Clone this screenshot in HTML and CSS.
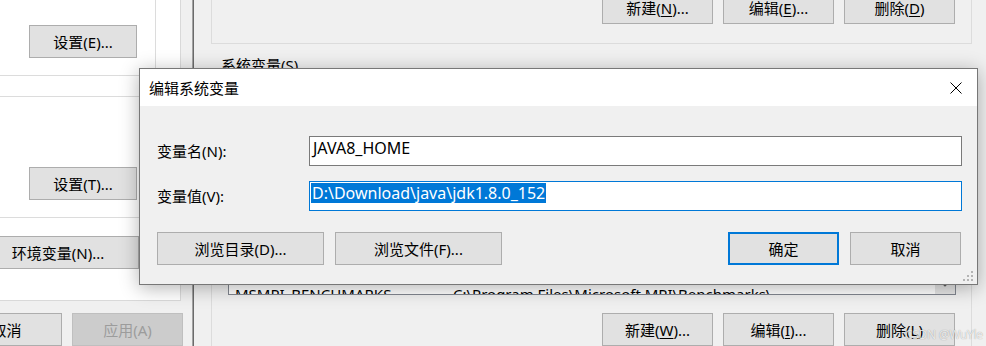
FILE: index.html
```html
<!DOCTYPE html>
<html lang="zh-CN">
<head>
<meta charset="utf-8">
<title>编辑系统变量</title>
<link rel="stylesheet" href="styles.css">
</head>
<body>
<div class="sysprops">
  <div class="tabpage">
    <div class="grp grp-perf"><button class="btn btn-set">设置(E)...</button></div>
    <div class="grp grp-profile"><button class="btn btn-set">设置(T)...</button></div>
    <button class="btn btn-env">环境变量(N)...</button>
  </div>
  <div class="sys-foot">
    <button class="btn btn-std">取消</button>
    <button class="btn btn-std" disabled>应用(A)</button>
  </div>
</div>

<div class="envwin">
  <div class="grp grp-user">
    <button class="btn btn-std">新建(<u>N</u>)...</button>
    <button class="btn btn-std">编辑(<u>E</u>)...</button>
    <button class="btn btn-std">删除(<u>D</u>)</button>
  </div>
  <div class="grp-caption">系统变量(S)</div>
  <div class="grp grp-sys">
    <div class="listbox">
      <div class="list-rows">
        <div class="list-row list-head"><span>变量</span><span>值</span></div>
        <div class="list-row"><span>asl.log</span><span>Destination=file</span></div>
        <div class="list-row"><span>CLASSPATH</span><span>.;%JAVA_HOME%\lib;%JAVA_HOME%\lib\tools.jar</span></div>
        <div class="list-row"><span>ComSpec</span><span>C:\Windows\system32\cmd.exe</span></div>
        <div class="list-row"><span>configsetroot</span><span>C:\Windows\ConfigSetRoot</span></div>
        <div class="list-row"><span>DriverData</span><span>C:\Windows\System32\Drivers\DriverData</span></div>
        <div class="list-row"><span>JAVA8_HOME</span><span>D:\Download\java\jdk1.8.0_152</span></div>
        <div class="list-row"><span>JAVA_HOME</span><span>C:\Program Files\Java\jdk1.8.0</span></div>
        <div class="list-row"><span>MSMPI_BENCHMARKS</span><span>C:\Program Files\Microsoft MPI\Benchmarks\</span></div>
        <div class="list-row"><span>MSMPI_BIN</span><span>C:\Program Files\Microsoft MPI\Bin\</span></div>
      </div>
      <div class="vscroll">
        <div class="vtrack"></div>
        <div class="varrow">
          <svg width="10" height="6" viewBox="0 0 10 6"><path d="M0.5 0.5L5 5L9.5 0.5" fill="none" stroke="#606060" stroke-width="1.2"/></svg>
        </div>
      </div>
    </div>
    <div class="grp-sys-actions">
      <button class="btn btn-std">新建(<u>W</u>)...</button>
      <button class="btn btn-std">编辑(<u>I</u>)...</button>
      <button class="btn btn-std">删除(<u>L</u>)</button>
    </div>
  </div>
</div>

<div class="dialog" role="dialog" aria-label="编辑系统变量">
  <div class="dlg-title">
    <span class="dlg-caption">编辑系统变量</span>
    <svg class="dlg-close" width="12" height="12" viewBox="0 0 12 12"><path d="M0.5 0.5L11.5 11.5M11.5 0.5L0.5 11.5" stroke="#000" stroke-width="1"/></svg>
  </div>
  <div class="dlg-body">
    <div class="field">
      <label class="field-label">变量名(N):</label>
      <div class="field-input">JAVA8_HOME</div>
    </div>
    <div class="field">
      <label class="field-label">变量值(V):</label>
      <div class="field-input focused"><span class="sel">D:\Download\java\jdk1.8.0_152</span></div>
    </div>
    <div class="dlg-actions">
      <button class="btn btn-wide">浏览目录(D)...</button>
      <button class="btn btn-wide">浏览文件(F)...</button>
      <span class="spacer"></span>
      <button class="btn btn-std btn-default">确定</button>
      <button class="btn btn-std">取消</button>
    </div>
  </div>
  <svg class="grip" width="11" height="11" viewBox="0 0 11 11" fill="#b4b4b4">
    <rect x="8" y="0" width="2" height="2"/>
    <rect x="4" y="4" width="2" height="2"/><rect x="8" y="4" width="2" height="2"/>
    <rect x="0" y="8" width="2" height="2"/><rect x="4" y="8" width="2" height="2"/><rect x="8" y="8" width="2" height="2"/>
  </svg>
</div>

<div class="watermark">CSDN @WuYle</div>
</body>
</html>
```

FILE: styles.css
```css
* { box-sizing: border-box; margin: 0; padding: 0; }

html, body {
  width: 986px;
  height: 346px;
  overflow: hidden;
}

body {
  position: relative;
  display: flex;
  background: #f0f0f0;
  color: #000;
  font-family: "Noto Sans", "Noto Sans CJK SC", sans-serif;
  font-size: 15px;
  line-height: 20px;
}

u { text-decoration: underline; text-underline-offset: 2px; }

/* ---------- buttons ---------- */
.btn {
  flex: none;
  display: flex;
  align-items: center;
  justify-content: center;
  height: 33px;
  padding: 0;
  background: #e1e1e1;
  border: 1px solid #adadad;
  border-radius: 0;
  font: inherit;
  color: #000;
  white-space: nowrap;
  appearance: none;
}
.btn:disabled { background: #cccccc; border-color: #bfbfbf; color: #9c9c9c; }
.btn-std { width: 111px; }
.btn-set { width: 108px; }
.btn-wide { width: 167px; }
.btn-default { border: 2px solid #0078d7; }

/* ---------- left window (system properties) ---------- */
.sysprops {
  flex: none;
  width: 192px;
  display: flex;
  flex-direction: column;
  background: #f0f0f0;
}
.tabpage {
  width: 181px;
  height: 314px;
  background: #fff;
  border-right: 1px solid #d9d9d9;
  border-bottom: 1px solid #d9d9d9;
  display: flex;
  flex-direction: column;
  align-items: flex-start;
}
.grp { border: 1px solid #dcdcdc; }
.grp-perf {
  width: 156px;
  height: 76px;
  border-top: 0;
  border-left: 0;
  padding: 25px 0 0 29px;
}
.grp-profile {
  width: 156px;
  height: 122px;
  margin-top: 20px;
  border-left: 0;
  padding: 70px 0 0 29px;
}
.btn-env { width: 162px; margin: 18px 0 0 -23px; }
.sys-foot {
  display: flex;
  gap: 10px;
  margin: 12px 0 0 -49px;
}

/* ---------- right window (environment variables) ---------- */
.envwin {
  flex: 1;
  min-width: 0;
  display: flex;
  flex-direction: column;
  align-items: flex-start;
  background: #f0f0f0;
  border-left: 1px solid #a3a3a3;
  box-shadow: inset 1px 0 0 #6b6b6b;
}
.grp-user {
  width: 761px;
  height: 69px;
  margin: -20px 0 0 18px;
  display: flex;
  justify-content: flex-end;
  align-items: flex-end;
  gap: 10px;
  padding: 0 16px 19px 0;
}
.grp-caption { height: 20px; margin: 11px 0 0 28px; }
.grp-sys {
  flex: 1;
  width: 761px;
  margin-left: 18px;
  border-bottom: 0;
  padding: 4px 15px 0 16px;
}
.listbox {
  height: 215px;
  border: 1px solid #828790;
  background: #fff;
  display: flex;
}
.list-rows { flex: 1; min-width: 0; overflow: hidden; padding-top: 7px; }
.list-row {
  display: grid;
  grid-template-columns: 218px 1fr;
  height: 24px;
  line-height: 24px;
  white-space: nowrap;
}
.list-head { height: 26px; line-height: 26px; }
.list-row span { padding-left: 6px; overflow: hidden; }
.vscroll {
  width: 20px;
  display: flex;
  flex-direction: column;
  background: #f0f0f0;
}
.vtrack { flex: 1; }
.varrow {
  height: 20px;
  display: flex;
  align-items: center;
  justify-content: center;
  background: #e6e6e6;
}
.grp-sys-actions {
  display: flex;
  justify-content: flex-end;
  gap: 10px;
  margin-top: 18px;
  padding-right: 1px;
}

/* ---------- modal dialog ---------- */
.dialog {
  position: absolute;
  left: 139px;
  top: 68px;
  width: 839px;
  height: 217px;
  display: flex;
  flex-direction: column;
  background: #f0f0f0;
  border: 1px solid #777777;
  box-shadow: 0 3px 18px rgba(0, 0, 0, 0.3);
}
.dlg-title {
  height: 37px;
  flex: none;
  display: flex;
  align-items: center;
  background: #fff;
  padding: 0 15px 0 9px;
}
.dlg-caption { flex: 1; }
.dlg-close { display: block; }
.dlg-body {
  flex: 1;
  display: flex;
  flex-direction: column;
  padding: 30px 15px 19px 17px;
}
.field { display: flex; align-items: center; height: 30px; }
.field + .field { margin-top: 15px; }
.field-label { width: 152px; flex: none; }
.field-input {
  flex: 1;
  height: 30px;
  padding: 1px 1px 0 3px;
  background: #fff;
  border: 1px solid #7a7a7a;
  font-size: 16px;
  white-space: nowrap;
}
.field-input.focused { border-color: #0078d7; padding-left: 1px; }
.sel { display: inline-block; background: #0078d7; color: #fff; padding: 0 1px; }
.dlg-actions {
  display: flex;
  gap: 11px;
  margin-top: 21px;
  padding-right: 1px;
}
.spacer { flex: 1; }
.grip { position: absolute; right: 3px; bottom: 2px; }

.watermark {
  position: absolute;
  left: 905px;
  top: 325px;
  font-size: 12px;
  letter-spacing: -0.3px;
  color: rgba(255, 255, 255, 0.8);
  text-shadow: 0 0 1px rgba(0, 0, 0, 0.4);
}
```
